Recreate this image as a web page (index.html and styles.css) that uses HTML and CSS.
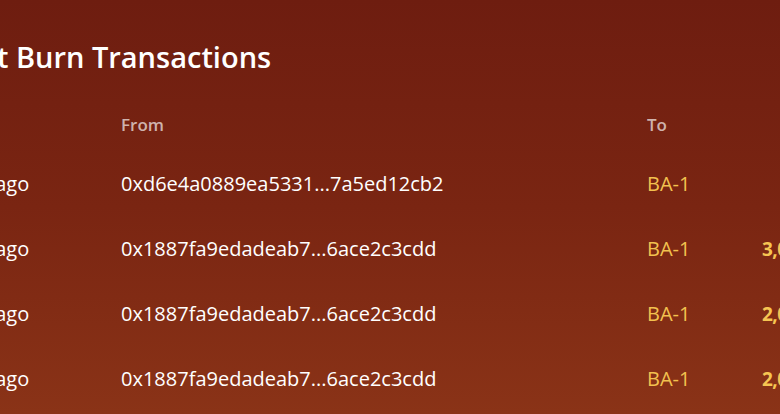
FILE: index.html
```html
<!DOCTYPE html>
<html>
<head>
<meta charset="utf-8">
<link rel="stylesheet" href="styles.css">
</head>
<body>
<main class="page">
  <h1 class="title">Latest Burn Transactions</h1>
  <div class="table">
    <div class="row head">
      <div class="cell">Time</div>
      <div class="cell">From</div>
      <div class="cell">To</div>
      <div class="cell amt-head">Amount</div>
    </div>
    <div class="row">
      <div class="cell time">2 mins ago</div>
      <div class="cell addr">0xd6e4a0889ea5331...7a5ed12cb2</div>
      <div class="cell to">BA-1</div>
      <div class="cell amt"></div>
    </div>
    <div class="row">
      <div class="cell time">5 mins ago</div>
      <div class="cell addr">0x1887fa9edadeab7...6ace2c3cdd</div>
      <div class="cell to">BA-1</div>
      <div class="cell amt">3,000</div>
    </div>
    <div class="row">
      <div class="cell time">6 mins ago</div>
      <div class="cell addr">0x1887fa9edadeab7...6ace2c3cdd</div>
      <div class="cell to">BA-1</div>
      <div class="cell amt">2,000</div>
    </div>
    <div class="row">
      <div class="cell time">8 mins ago</div>
      <div class="cell addr">0x1887fa9edadeab7...6ace2c3cdd</div>
      <div class="cell to">BA-1</div>
      <div class="cell amt">2,000</div>
    </div>
  </div>
</main>
</body>
</html>
```
FILE: styles.css
```css
html, body {
  margin: 0;
  padding: 0;
  width: 780px;
  height: 414px;
  overflow: hidden;
}
body {
  background: linear-gradient(180deg, #6e1d10 0%, #7a2512 50%, #8a3317 100%);
  font-family: "Open Sans", "DejaVu Sans", sans-serif;
  color: #ffffff;
}
.page {
  margin-left: -72px;
  padding-top: 37px;
  width: 1100px;
}
.title {
  margin: 0 0 0 -6px;
  font-size: 29px;
  font-weight: 600;
  line-height: 40px;
  color: #ffffff;
}
.table {
  margin-top: 33px;
}
.row {
  display: grid;
  grid-template-columns: 193px 526px 115px 240px;
  height: 65px;
  align-items: center;
  font-size: 20px;
}
.row.head {
  height: 28px;
  margin-bottom: 13px;
  color: rgba(255, 255, 255, 0.66);
  font-size: 17px;
  font-weight: 600;
}
.amt-head { text-align: right; }
.addr { color: #ffffff; }
.time { color: #ffffff; }
.to { color: #f2c14f; }
.amt { color: #f6c552; font-weight: 700; font-size: 19px; letter-spacing: -0.5px; }
```
